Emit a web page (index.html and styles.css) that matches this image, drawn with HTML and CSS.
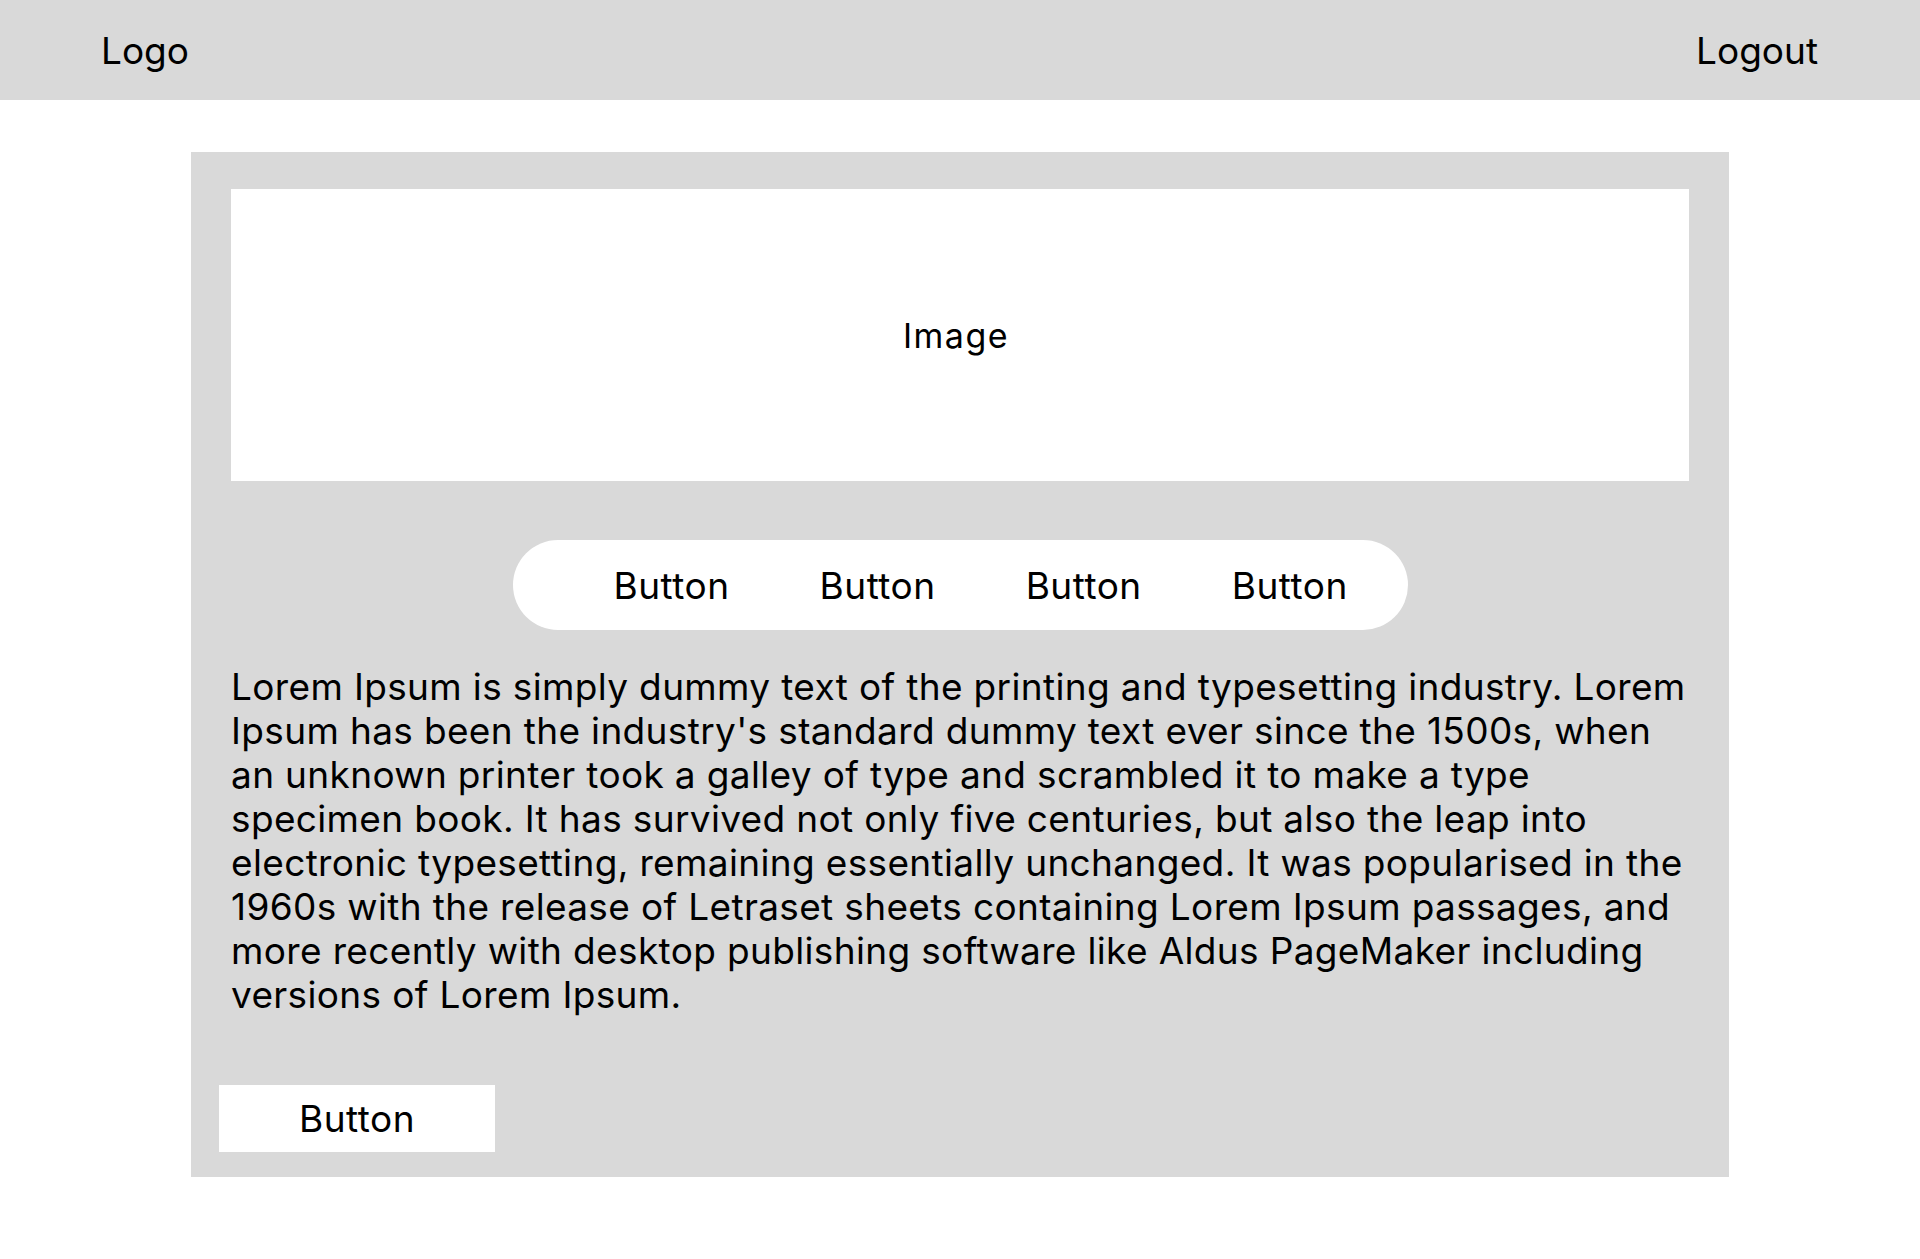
FILE: index.html
```html
<!DOCTYPE html>
<html lang="en">
<head>
    <meta charset="UTF-8">
    <meta name="viewport" content="width=device-width, initial-scale=1.0">
    <title>Wireframe</title>
    <link rel="stylesheet" href="styles.css">
</head>
<body>
    <header class="topbar">
        <span class="logo">Logo</span>
        <a class="logout" href="#">Logout</a>
    </header>

    <main class="card">
        <div class="image-box">Image</div>

        <nav class="pill">
            <button class="pill-btn">Button</button>
            <button class="pill-btn">Button</button>
            <button class="pill-btn">Button</button>
            <button class="pill-btn">Button</button>
        </nav>

        <p class="text">Lorem Ipsum is simply dummy text of the printing and typesetting industry. Lorem Ipsum has been the industry's standard dummy text ever since the 1500s, when an unknown printer took a galley of type and scrambled it to make a type specimen book. It has survived not only five centuries, but also the leap into electronic typesetting, remaining essentially unchanged. It was popularised in the 1960s with the release of Letraset sheets containing Lorem Ipsum passages, and more recently with desktop publishing software like Aldus PageMaker including versions of Lorem Ipsum.</p>

        <button class="action">Button</button>
    </main>
</body>
</html>
```

FILE: styles.css
```css
body {
    margin: 0;
    font-family: Inter, "Noto Sans", sans-serif;
    font-size: 37px;
    color: #000;
    background: #fff;
}
.topbar {
    height: 100px;
    background: #d9d9d9;
    display: flex;
    align-items: center;
    justify-content: space-between;
    padding: 0 102px 0 101px;
}
.logout {
    color: #000;
    text-decoration: none;
}
.card {
    width: 1538px;
    box-sizing: border-box;
    margin: 52px auto 0;
    background: #d9d9d9;
    padding: 37px 40px 25px;
    display: flex;
    flex-direction: column;
}
.image-box {
    height: 292px;
    background: #fff;
    display: flex;
    align-items: center;
    justify-content: center;
    font-size: 34px;
    letter-spacing: 1.5px;
    padding-right: 8px;
}
.pill {
    align-self: center;
    margin-top: 59px;
    height: 90px;
    width: 895px;
    box-sizing: border-box;
    background: #fff;
    border-radius: 45px;
    display: flex;
    align-items: center;
    gap: 90px;
    padding: 0 56px 0 101px;
}
button {
    font: inherit;
    letter-spacing: 0.5px;
    color: #000;
    border: none;
    padding: 0;
    cursor: pointer;
}
.pill-btn {
    background: none;
}
.text {
    margin: 35px 0 0;
    line-height: 44px;
    letter-spacing: 0.35px;
}
.action {
    margin: 68px 0 0 -12px;
    width: 276px;
    height: 67px;
    background: #fff;
    align-self: flex-start;
}
```
